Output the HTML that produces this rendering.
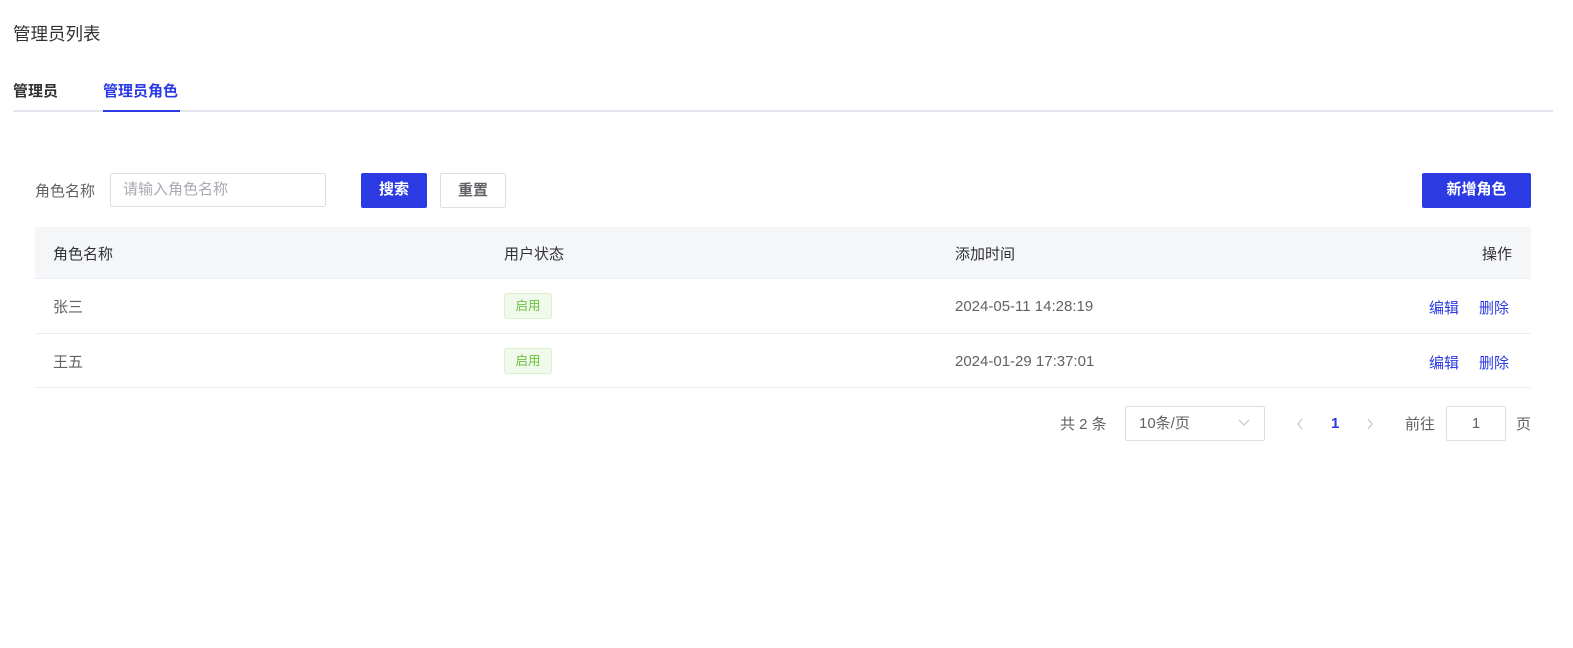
<!DOCTYPE html>
<html><head><meta charset="utf-8"><style>
*{box-sizing:border-box;margin:0;padding:0}
body{width:1573px;height:648px;background:#fff;font-family:"Liberation Sans","Noto Sans CJK SC",sans-serif;color:#303133;position:relative;overflow:hidden}
.a{position:absolute;white-space:nowrap;font-size:15px}
.btn{position:absolute;border-radius:2px;font-size:15px;font-weight:bold;text-align:center;line-height:33px;height:35px}
.link{color:#2b3ae3;font-size:15px}
.tag{position:absolute;left:504px;width:48px;height:26px;border:1px solid #d9f0cf;background:#f0f9eb;color:#67c23a;font-size:12.5px;text-align:center;line-height:24px;border-radius:3px}
</style></head><body>
<div class="a" style="left:13px;top:21px;font-size:17.5px;color:#303133">管理员列表</div>
<div class="a" style="left:13px;top:80px;font-weight:bold">管理员</div>
<div class="a" style="left:103px;top:80px;font-weight:bold;color:#2b3ae3">管理员角色</div>
<div class="a" style="left:13px;top:110px;width:1540px;height:2px;background:#e4e7ed"></div>
<div class="a" style="left:103px;top:110px;width:77px;height:2px;background:#2b3ae3"></div>

<div class="a" style="left:35px;top:180px;color:#606266">角色名称</div>
<div class="a" style="left:110px;top:173px;width:216px;height:34px;border:1px solid #dcdfe6;border-radius:2px;padding-left:12px;line-height:32px;color:#a8abb2">请输入角色名称</div>
<div class="btn" style="left:361px;top:173px;width:66px;background:#2b3ae3;color:#fff">搜索</div>
<div class="btn" style="left:440px;top:173px;width:66px;border:1px solid #dcdfe6;color:#606266;background:#fff">重置</div>
<div class="btn" style="left:1422px;top:173px;width:109px;background:#2b3ae3;color:#fff">新增角色</div>

<div class="a" style="left:35px;top:227px;width:1496px;height:52px;background:#f5f6f8;border-bottom:1px solid #ebeef5"></div>
<div class="a" style="left:53px;top:243px;color:#303133">角色名称</div>
<div class="a" style="left:504px;top:243px">用户状态</div>
<div class="a" style="left:955px;top:243px">添加时间</div>
<div class="a" style="left:1482px;top:243px">操作</div>

<div class="a" style="left:53px;top:296px;color:#606266">张三</div>
<div class="tag" style="top:293px">启用</div>
<div class="a" style="left:955px;top:298px;color:#606266">2024-05-11 14:28:19</div>
<div class="a link" style="left:1429px;top:297px">编辑</div>
<div class="a link" style="left:1479px;top:297px">删除</div>
<div class="a" style="left:35px;top:333px;width:1496px;height:1px;background:#ebeef5"></div>

<div class="a" style="left:53px;top:351px;color:#606266">王五</div>
<div class="tag" style="top:348px">启用</div>
<div class="a" style="left:955px;top:353px;color:#606266">2024-01-29 17:37:01</div>
<div class="a link" style="left:1429px;top:352px">编辑</div>
<div class="a link" style="left:1479px;top:352px">删除</div>
<div class="a" style="left:35px;top:387px;width:1496px;height:1px;background:#ebeef5"></div>

<div class="a" style="left:1060px;top:413px;color:#606266">共 2 条</div>
<div class="a" style="left:1125px;top:406px;width:140px;height:35px;border:1px solid #dcdfe6;border-radius:2px;padding-left:13px;line-height:33px;color:#606266">10条/页
<svg style="position:absolute;right:14px;top:12px" width="12" height="8" viewBox="0 0 12 8"><path d="M1 1l5 5 5-5" fill="none" stroke="#c0c4cc" stroke-width="1.2"/></svg></div>
<svg class="a" style="left:1296px;top:418px" width="8" height="12" viewBox="0 0 8 12"><path d="M6 1L2 6l4 5" fill="none" stroke="#c0c4cc" stroke-width="1.2"/></svg>
<div class="a" style="left:1331px;top:415px;font-weight:bold;color:#2b3ae3">1</div>
<svg class="a" style="left:1366px;top:418px" width="8" height="12" viewBox="0 0 8 12"><path d="M2 1l4 5-4 5" fill="none" stroke="#c0c4cc" stroke-width="1.2"/></svg>
<div class="a" style="left:1405px;top:413px;color:#606266">前往</div>
<div class="a" style="left:1446px;top:406px;width:60px;height:35px;border:1px solid #dcdfe6;border-radius:2px;text-align:center;line-height:33px;color:#606266">1</div>
<div class="a" style="left:1516px;top:413px;color:#606266">页</div>
</body></html>
